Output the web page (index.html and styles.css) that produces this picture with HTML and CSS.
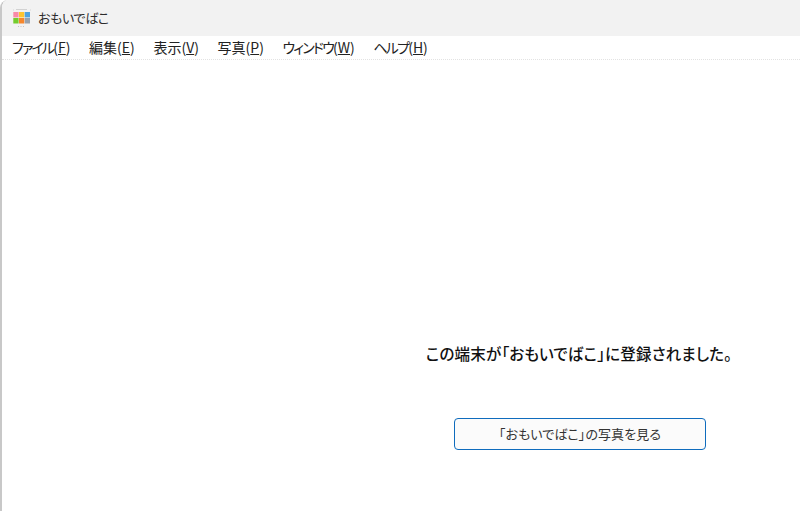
FILE: index.html
```html
<!DOCTYPE html>
<html lang="ja">
<head>
<meta charset="utf-8">
<title>おもいでばこ</title>
<link rel="stylesheet" href="styles.css">
</head>
<body>
<div class="window">
  <header class="titlebar">
    <svg class="app-icon" width="18" height="18" viewBox="0 0 18 18" aria-hidden="true">
      <rect x="0.3" y="3" width="5.3" height="5.4" fill="#f98aa8"/>
      <rect x="6" y="3" width="5.3" height="5.4" fill="#fcc42f"/>
      <rect x="11.7" y="3" width="5.3" height="5.4" fill="#4fa3e0"/>
      <rect x="0.3" y="9" width="5.3" height="5.5" fill="#74cc2c"/>
      <rect x="6" y="9" width="5.3" height="5.5" fill="#f6862c"/>
      <rect x="11.7" y="9" width="5.3" height="5.5" fill="#98a2ae"/>
      <path d="M3 0.5h11" stroke="#d2d2d2" stroke-width="1"/>
      <path d="M5 17.5h7" stroke="#c4c4c4" stroke-width="1" stroke-dasharray="1 1.5"/>
      <path d="M0 1h1M17 1h1" stroke="#d6d6d6" stroke-width="1"/>
    </svg>
    <span class="app-title">おもいでばこ</span>
  </header>
  <nav class="menubar">
    <span class="menu-item"><span class="kana">ファイル</span>(<u>F</u>)</span>
    <span class="menu-item">編集(<u>E</u>)</span>
    <span class="menu-item">表示(<u>V</u>)</span>
    <span class="menu-item">写真(<u>P</u>)</span>
    <span class="menu-item"><span class="kana">ウィンドウ</span>(<u>W</u>)</span>
    <span class="menu-item"><span class="kana">ヘルプ</span>(<u>H</u>)</span>
  </nav>
  <main class="content">
    <p class="message">この端末が「おもいでばこ」に登録されました。</p>
    <button class="action" type="button">「おもいでばこ」の写真を見る</button>
  </main>
</div>
</body>
</html>
```
FILE: styles.css
```css
* { box-sizing: border-box; }
html, body { margin: 0; height: 100%; background: #fff; overflow: hidden; }
body {
  font-family: "Noto Sans CJK JP", "Noto Sans", sans-serif;
  font-feature-settings: "palt";
  color: #1a1a1a;
}
.window {
  height: 511px;
  display: flex;
  flex-direction: column;
  border-left: 2px solid #c8c8c8;
  border-top-left-radius: 8px;
  overflow: hidden;
}
.titlebar {
  height: 36px;
  flex: none;
  display: flex;
  align-items: center;
  gap: 7px;
  padding-left: 11px;
  background: #f2f2f2;
}
.app-icon { flex: none; }
.app-title {
  font-size: 13px;
  letter-spacing: -0.3px;
  color: #2b2b2b;
  padding-bottom: 2px;
}
.menubar {
  height: 24px;
  flex: none;
  display: flex;
  align-items: center;
  gap: 18.6px;
  padding: 0 0 2px 10px;
  border-bottom: 1px dotted #e2e2e2;
  font-size: 14px;
  color: #222;
}
.menu-item { white-space: nowrap; }
.kana { letter-spacing: -1.8px; }
.content {
  flex: 1;
  display: flex;
  flex-direction: column;
  align-items: center;
  padding-left: 358px;
  padding-top: 282px;
}
.message {
  margin: 0 2px 0 0;
  font-size: 15.5px;
  font-weight: 500;
  line-height: 22px;
  letter-spacing: 0.2px;
  color: #111;
  white-space: nowrap;
}
.action {
  margin-top: 54px;
  width: 252px;
  height: 32px;
  padding: 0 0 2px;
  background: #fbfbfb;
  border: 1px solid #0f6cbd;
  border-radius: 4px;
  font: inherit;
  font-size: 13px;
  letter-spacing: 0.1px;
  color: #333;
}
```
